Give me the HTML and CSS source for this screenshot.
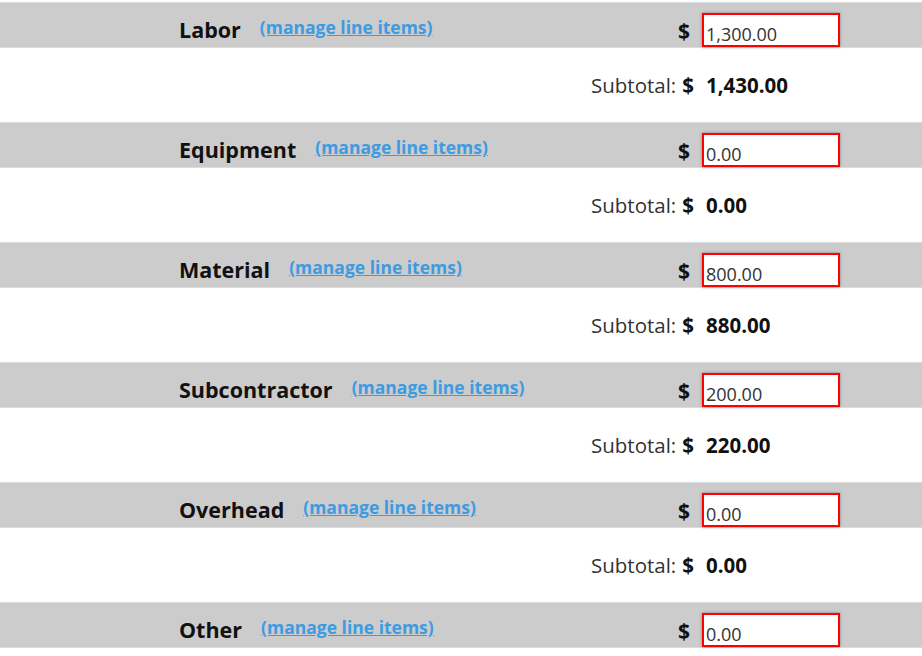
FILE: index.html
```html
<!DOCTYPE html>
<html lang="en">
<head>
    <meta charset="UTF-8">
    <meta name="viewport" content="width=device-width, initial-scale=1.0">
    <title>cost breakdown</title>
    <link rel="stylesheet" href="styles.css">
</head>
<body>
    <div class="costs">
        <div class="cost">
            <div class="band">
                <div class="name">
                    <h3>Labor</h3>
                    <a href="#">(manage line items)</a>
                </div>
                <div class="amount">
                    <span class="cur">$</span>
                    <input type="text" value="1,300.00">
                </div>
            </div>
            <div class="subtotal">
                <span class="sub-label">Subtotal:</span>
                <span class="sub-cur">$</span>
                <span class="sub-value">1,430.00</span>
            </div>
        </div>

        <div class="cost">
            <div class="band">
                <div class="name">
                    <h3>Equipment</h3>
                    <a href="#">(manage line items)</a>
                </div>
                <div class="amount">
                    <span class="cur">$</span>
                    <input type="text" value="0.00">
                </div>
            </div>
            <div class="subtotal">
                <span class="sub-label">Subtotal:</span>
                <span class="sub-cur">$</span>
                <span class="sub-value">0.00</span>
            </div>
        </div>

        <div class="cost">
            <div class="band">
                <div class="name">
                    <h3>Material</h3>
                    <a href="#">(manage line items)</a>
                </div>
                <div class="amount">
                    <span class="cur">$</span>
                    <input type="text" value="800.00">
                </div>
            </div>
            <div class="subtotal">
                <span class="sub-label">Subtotal:</span>
                <span class="sub-cur">$</span>
                <span class="sub-value">880.00</span>
            </div>
        </div>

        <div class="cost">
            <div class="band">
                <div class="name">
                    <h3>Subcontractor</h3>
                    <a href="#">(manage line items)</a>
                </div>
                <div class="amount">
                    <span class="cur">$</span>
                    <input type="text" value="200.00">
                </div>
            </div>
            <div class="subtotal">
                <span class="sub-label">Subtotal:</span>
                <span class="sub-cur">$</span>
                <span class="sub-value">220.00</span>
            </div>
        </div>

        <div class="cost">
            <div class="band">
                <div class="name">
                    <h3>Overhead</h3>
                    <a href="#">(manage line items)</a>
                </div>
                <div class="amount">
                    <span class="cur">$</span>
                    <input type="text" value="0.00">
                </div>
            </div>
            <div class="subtotal">
                <span class="sub-label">Subtotal:</span>
                <span class="sub-cur">$</span>
                <span class="sub-value">0.00</span>
            </div>
        </div>

        <div class="cost">
            <div class="band">
                <div class="name">
                    <h3>Other</h3>
                    <a href="#">(manage line items)</a>
                </div>
                <div class="amount">
                    <span class="cur">$</span>
                    <input type="text" value="0.00">
                </div>
            </div>
        </div>
    </div>
</body>
</html>
```

FILE: styles.css
```css
body {
    margin: 0;
    padding: 0;
    font-family: "Open Sans", sans-serif;
    background-color: white;
    color: #111;
}
.costs {
    padding-top: 2px;
}
.band {
    display: flex;
    align-items: flex-start;
    justify-content: space-between;
    height: 46px;
    box-sizing: border-box;
    background-color: #cccccc;
    border-top: 1px solid #dcdcdc;
    border-bottom: 1px solid #dcdcdc;
}
.name {
    display: flex;
    align-items: flex-start;
    padding-left: 179px;
}
.name h3 {
    margin: 12px 0 0;
    font-size: 21.5px;
    line-height: 29px;
    font-weight: 700;
}
.name a {
    margin: 12px 0 0 19px;
    font-size: 17.5px;
    line-height: 24px;
    font-weight: 700;
    color: #3d9be2;
    text-decoration: underline;
}
.amount {
    display: flex;
    align-items: flex-start;
    margin-right: 82px;
}
.cur {
    margin-top: 14px;
    margin-right: 12px;
    font-size: 21px;
    line-height: 29px;
    font-weight: 700;
}
.amount input {
    box-sizing: border-box;
    width: 138px;
    height: 34px;
    margin-top: 10px;
    padding: 7px 2px 0;
    border: 2px solid #ff0000;
    outline: none;
    background-color: white;
    box-shadow: 0 0 3px rgba(0, 0, 0, 0.35);
    font-family: "Open Sans", sans-serif;
    font-size: 18px;
    color: #333;
}
.subtotal {
    display: flex;
    align-items: center;
    justify-content: flex-end;
    height: 74px;
    padding-right: 82px;
    font-size: 20.5px;
    line-height: 28px;
}
.sub-label {
    color: #333;
    margin-right: 6px;
}
.sub-cur {
    font-weight: 700;
    margin-right: 12px;
}
.sub-value {
    width: 134px;
    font-weight: 700;
}
```
